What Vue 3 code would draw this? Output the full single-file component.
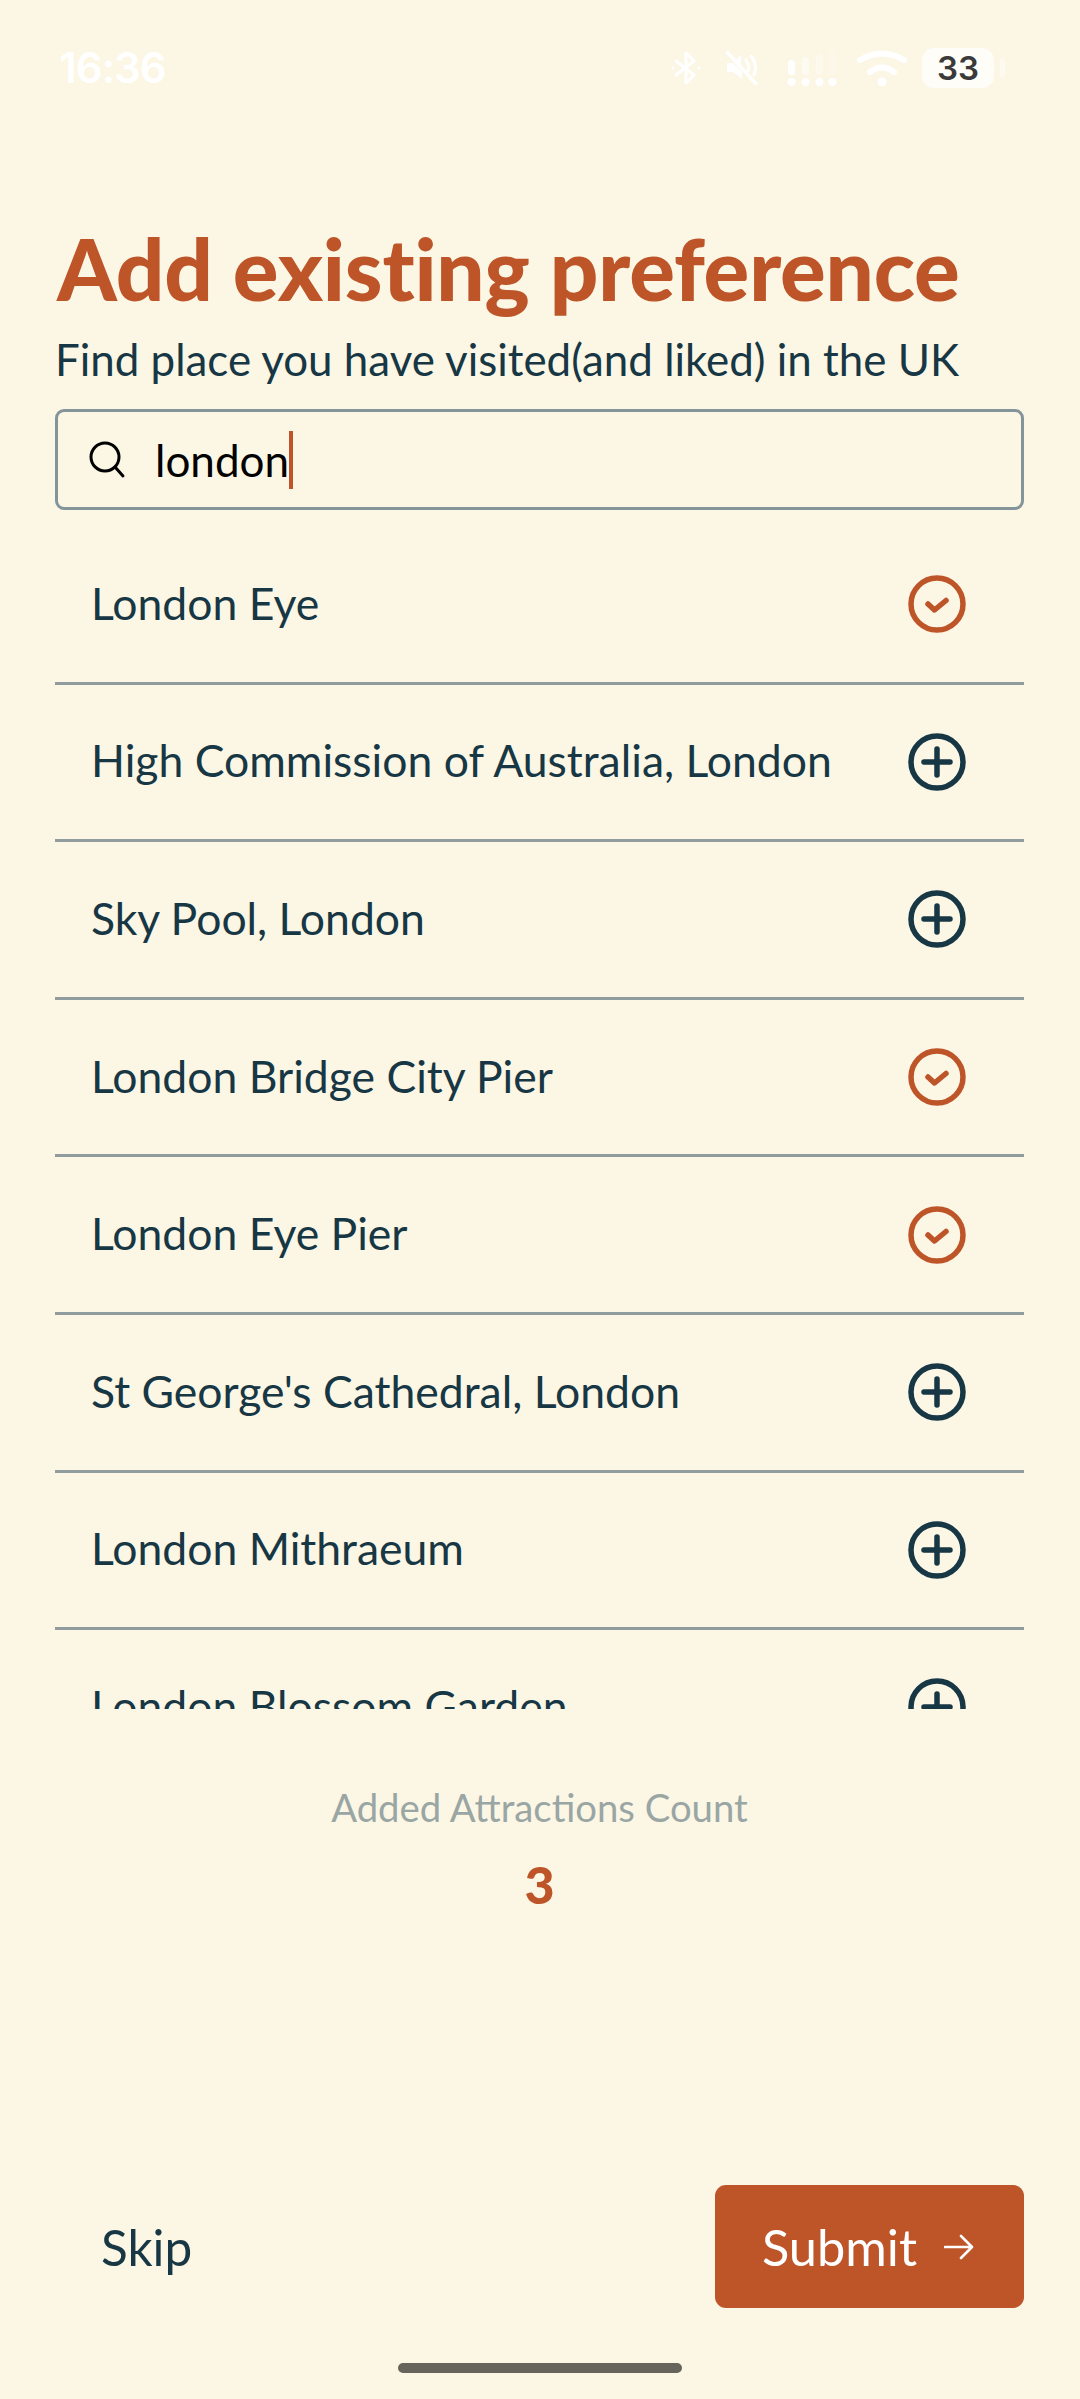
<script setup>
const rows = [
  { name: 'London Eye', added: true },
  { name: 'High Commission of Australia, London', added: false },
  { name: 'Sky Pool, London', added: false },
  { name: 'London Bridge City Pier', added: true },
  { name: 'London Eye Pier', added: true },
  { name: "St George's Cathedral, London", added: false },
  { name: 'London Mithraeum', added: false },
  { name: 'London Blossom Garden', added: false },
]
</script>

<template>
  <div class="page">
    <div class="status">
      <span class="time">16:36</span>
      <div class="status-icons">
        <svg class="bt" width="30" height="34" viewBox="0 0 30 34" fill="none" stroke="#fff" stroke-width="3" stroke-linecap="round" stroke-linejoin="round">
          <path d="M5 10 L23 24 L15 32 V2 L23 10 L5 24" />
          <circle cx="2" cy="17" r="1.5" fill="#fff" stroke="none" />
          <circle cx="28" cy="17" r="1.5" fill="#fff" stroke="none" />
        </svg>
        <svg class="mute" width="32" height="34" viewBox="0 0 32 34" fill="none" stroke="#fff" stroke-linecap="round">
          <path d="M1 12 H7 L16 21 V28 L7 21 H1 Z" fill="#fff" stroke="none" />
          <path d="M8 10 L15 4 V14" fill="#fff" stroke="none" />
          <path d="M20 9 Q24 15 22 20 M25 5 Q32 14 28 24" stroke-width="3" />
          <path d="M1 1 L30 33" stroke-width="3.5" />
        </svg>
        <svg class="signal" width="50" height="36" viewBox="0 0 50 36" fill="#fff">
          <rect x="1" y="10" width="7" height="15" rx="3.5" />
          <rect x="15" y="7" width="7" height="18" rx="3.5" opacity=".45" />
          <rect x="29" y="4" width="7" height="21" rx="3.5" opacity=".3" />
          <rect x="42" y="0" width="7" height="25" rx="3.5" opacity=".2" />
          <circle cx="4.5" cy="32" r="4" />
          <circle cx="18.5" cy="32" r="4" />
          <circle cx="32.5" cy="32" r="4" />
          <circle cx="45.5" cy="32" r="4" />
        </svg>
        <svg class="wifi" width="50" height="36" viewBox="0 0 50 36" fill="none" stroke="#fff" stroke-width="6" stroke-linecap="round">
          <path d="M3 10 Q25 -3 47 10" />
          <path d="M13 22 Q25 13 37 22" />
          <circle cx="25" cy="32" r="4.5" fill="#fff" stroke="none" />
        </svg>
        <div class="battery"><span>33</span></div>
        <span class="tip"></span>
      </div>
    </div>

    <main class="content">
      <h1 class="title">Add existing preference</h1>
      <p class="sub">Find place you have visited(and liked) in the UK</p>

      <div class="search">
        <svg width="38" height="38" viewBox="0 0 38 38" fill="none" stroke="#000" stroke-width="3" stroke-linecap="round">
          <circle cx="17" cy="16" r="14" />
          <path d="M27 26 L35 35" />
        </svg>
        <span class="query">london</span><span class="caret"></span>
      </div>

      <ul class="list">
        <li v-for="row in rows" :key="row.name" class="row">
          <span class="name">{{ row.name }}</span>
          <svg v-if="row.added" class="ic" width="60" height="60" viewBox="0 0 60 60" fill="none" stroke="#bd5529" stroke-width="5.5" stroke-linecap="round" stroke-linejoin="round">
            <circle cx="30" cy="30" r="26" />
            <path d="M21 30 L27.5 36 L39 26.5" />
          </svg>
          <svg v-else class="ic" width="60" height="60" viewBox="0 0 60 60" fill="none" stroke="#173744" stroke-width="5.5" stroke-linecap="round">
            <circle cx="30" cy="30" r="26" />
            <path d="M30 17 V43 M17 30 H43" />
          </svg>
        </li>
      </ul>

      <div class="count">
        <span class="count-label">Added Attractions Count</span>
        <strong class="count-value">3</strong>
      </div>
    </main>

    <footer class="footer">
      <span class="skip">Skip</span>
      <button class="submit">
        <span>Submit</span>
        <svg width="30" height="30" viewBox="0 0 30 30" fill="none" stroke="#fff" stroke-width="2.6" stroke-linecap="round" stroke-linejoin="round">
          <path d="M1 15 H28 M17 4 L28 15 L17 26" />
        </svg>
      </button>
    </footer>
    <div class="home-wrap"><div class="home"></div></div>
  </div>
</template>

<style>
html, body { margin: 0; background: #fcf6e5; }
</style>

<style scoped>
.page {
  width: 1080px;
  height: 2399px;
  background: #fcf6e5;
  display: flex;
  flex-direction: column;
  font-family: "Lato", "Noto Sans", sans-serif;
  color: #173744;
  overflow: hidden;
}
.status {
  height: 218px;
  box-sizing: border-box;
  padding: 48px 75px 0 59px;
  display: flex;
  justify-content: space-between;
  align-items: flex-start;
  flex: none;
}
.time {
  font-family: "Inter", sans-serif;
  font-size: 42px;
  line-height: 40px;
  font-weight: 600;
  color: #fff;
  letter-spacing: -1px;
}
.status-icons {
  display: flex;
  align-items: center;
  height: 40px;
}
.bt { margin-right: 25px; }
.mute { margin-right: 29px; }
.signal { margin-right: 20px; }
.wifi { margin-right: 15px; }
.battery {
  width: 72px;
  height: 40px;
  border-radius: 12px;
  background: #fffdf8;
  display: flex;
  align-items: center;
  justify-content: center;
  font-family: "Inter", sans-serif;
  font-size: 33px;
  font-weight: 600;
  color: #3a3a3a;
}
.tip {
  width: 5px;
  height: 18px;
  margin-left: 6px;
  border-radius: 0 3px 3px 0;
  background: #fffdf8;
  opacity: .6;
}
.content {
  padding: 0 56px 0 55px;
  flex: none;
}
.title {
  margin: 0 0 0 2px;
  font-size: 85.3px;
  line-height: 100px;
  font-weight: 900;
  color: #bd5529;
  letter-spacing: -0.2px;
}
.sub {
  margin: 15px 0 0;
  font-size: 43.9px;
  line-height: 52px;
  font-weight: 400;
}
.search {
  margin-top: 24px;
  height: 101px;
  box-sizing: border-box;
  border: 3px solid #84959a;
  border-radius: 9px;
  padding-left: 30px;
  display: flex;
  align-items: center;
}
.query {
  margin-left: 29px;
  font-size: 44px;
  line-height: 52px;
  color: #000;
}
.caret {
  width: 4px;
  height: 58px;
  margin-left: 0;
  background: #bd5529;
}
.list {
  list-style: none;
  margin: 17px 0 0;
  padding: 0;
  height: 1182px;
  overflow: hidden;
}
.row {
  height: 157.6px;
  box-sizing: border-box;
  border-bottom: 3.5px solid #909d9c;
  padding: 0 57px 0 36px;
  display: flex;
  justify-content: space-between;
  align-items: center;
}
.name {
  font-size: 44.5px;
  line-height: 52px;
  padding-bottom: 3px;
}
.ic { flex: none; }
.count {
  margin-top: 74px;
  display: flex;
  flex-direction: column;
  align-items: center;
}
.count-label {
  font-size: 38.3px;
  line-height: 48px;
  color: #9aa6a4;
}
.count-value {
  margin-top: 23px;
  font-size: 52px;
  line-height: 60px;
  font-weight: 900;
  color: #bd5529;
}
.footer {
  margin-top: auto;
  padding: 0 56px 0 101px;
  display: flex;
  justify-content: space-between;
  align-items: center;
}
.skip {
  font-size: 49.5px;
  line-height: 60px;
}
.submit {
  width: 309px;
  height: 123px;
  border: none;
  border-radius: 11px;
  background: #bd5529;
  color: #fff;
  font-family: inherit;
  font-size: 50.5px;
  padding: 0 3px 0 0;
  display: flex;
  align-items: center;
  justify-content: center;
  gap: 27px;
}
.home-wrap {
  height: 91px;
  padding-top: 55px;
  box-sizing: border-box;
  display: flex;
  justify-content: center;
}
.home {
  width: 284px;
  height: 10px;
  border-radius: 5px;
  background: #66645b;
}
</style>
